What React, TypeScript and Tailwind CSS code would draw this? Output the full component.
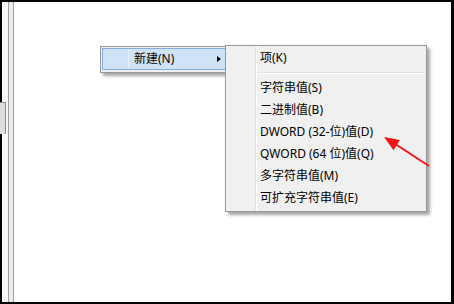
import React from 'react';

const items = [
  { label: '字符串值(S)' },
  { label: '二进制值(B)' },
  { label: 'DWORD (32-位)值(D)' },
  { label: 'QWORD (64 位)值(Q)' },
  { label: '多字符串值(M)' },
  { label: '可扩充字符串值(E)' },
];

const MenuItem: React.FC<{ label: string }> = ({ label }) => (
  <div className="h-[22px] leading-[22px] whitespace-nowrap">{label}</div>
);

export default function App() {
  return (
    <div className="relative w-[454px] h-[304px] overflow-hidden bg-black pt-[2px] pl-[2px] pr-[3px] pb-[2px] font-['Noto_Sans','Noto_Sans_CJK_SC',sans-serif] text-[12px] text-black">
      <div className="flex h-full bg-white">
        <div className="w-[7px] bg-[#f8f8f8] border-r border-[#a0a0a0]" />
        <div className="w-[5px] bg-[#ececec] border-r border-[#9c9cae]" />
        <div className="flex-1" />
      </div>

      {/* window edge peeking from behind */}
      <div className="absolute left-0 top-[102px] w-[6px] h-[32px] bg-[#dedede] border-t border-r border-[#8c8c8c]" />

      {/* parent context menu */}
      <div className="absolute left-[100px] top-[46px] w-[130px] h-[27px] border border-[#979797] bg-[#f0f0f0] pt-px pl-px pb-[2px] shadow-[3px_3px_3px_rgba(0,0,0,0.35)]">
        <div className="relative flex items-center h-[22px] border border-[#84ace0] bg-[#d0e2f6]">
          <div className="w-[26px] h-full border-r border-[#e6eef8]" />
          <span className="ml-[5px] leading-[20px]">新建(N)</span>
          <span className="ml-auto mr-[7px] w-0 h-0 border-y-[3px] border-y-transparent border-l-[4px] border-l-black" />
        </div>
      </div>

      {/* submenu */}
      <div className="absolute left-[225px] top-[45px] w-[202px] h-[167px] flex border border-[#979797] bg-[#f0f0f0] shadow-[3px_3px_3px_rgba(0,0,0,0.35)]">
        <div className="w-[30px] h-full border-r border-[#e2e3e3]" />
        <div className="flex-1 border-l border-white pt-px pl-[3px] pr-[2px]">
          <MenuItem label="项(K)" />
          <div className="h-[8px] flex flex-col justify-center -ml-[3px]">
            <div className="border-t border-[#e0e0e0] border-b border-b-white" />
          </div>
          {items.map(i => (
            <MenuItem key={i.label} label={i.label} />
          ))}
        </div>
      </div>

      {/* annotation arrow */}
      <svg className="absolute left-0 top-0 w-[454px] h-[304px] pointer-events-none" viewBox="0 0 454 304">
        <line x1="396" y1="144.5" x2="429" y2="166" stroke="#f41414" strokeWidth="2" />
        <polygon points="384,137 393.5,150.2 399.9,140" fill="#f41414" />
      </svg>
    </div>
  );
}
